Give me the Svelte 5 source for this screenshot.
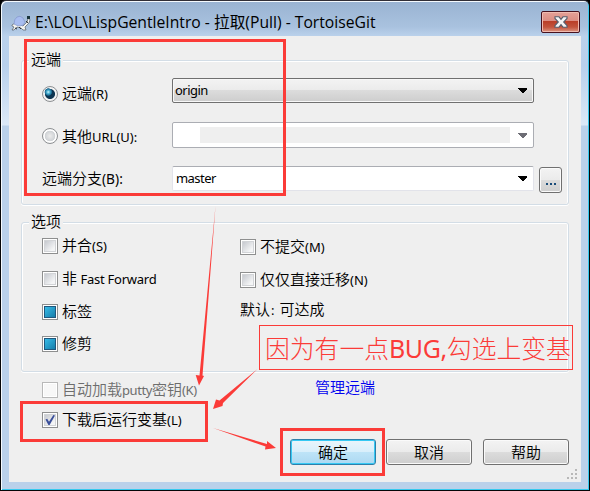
<script>
  let source = $state('remote');
  let options = $state([
    { cjk: '并合', latin: '(S)', mark: 'none', h: 32 },
    { cjk: '非', latin: 'Fast Forward', mark: 'none', h: 33, gap: true },
    { cjk: '标签', latin: '', mark: 'mixed', h: 33 },
    { cjk: '修剪', latin: '', mark: 'mixed', h: 32 }
  ]);
  let extra = $state([
    { cjk: '不提交', latin: '(M)', mark: 'none', h: 33 },
    { cjk: '仅仅直接迁移', latin: '(N)', mark: 'none', h: 34 }
  ]);
  let rebase = $state(true);
  const toggle = (o) => (o.mark = o.mark === 'none' ? 'mixed' : 'none');
</script>

{#snippet arrow()}
  <svg class="drop" width="9" height="5" viewBox="0 0 9 5" shape-rendering="crispEdges"><path d="M0 0H9V1L5 5H4L0 1Z" /></svg>
{/snippet}

{#snippet box(mark, disabled)}
  <span class="check" class:disabled>
    <span class="inner" class:mixed={mark === 'mixed'}></span>
    {#if mark === 'tick'}
      <svg class="tick" width="12" height="12" viewBox="0 0 12 12"><path d="M1.5 5.5 3.2 4.7 5 7.7 9.4 1 11 1.6 5.6 11 4.4 11Z" /></svg>
    {/if}
  </span>
{/snippet}

<div class="window">
  <header>
    <svg class="turtle" width="20" height="17" viewBox="0 0 20 17">
      <path d="M1 10 4 8 12 11 16 7 17 4 18 3 19 5 18 8 14 12 15 15H12L10 13 6 12 3 15H1L3 12 1 11Z" fill="#f4f4f0" stroke="#555b65" stroke-width=".7" />
      <path d="M3 9Q3 4 6 2Q9 0 12 3L14 7Q13 11 9 11Q6 11 3 9Z" fill="#a8bdf0" stroke="#8295c8" stroke-width=".7" />
      <path d="M16 1h3v3h-3z" fill="#18343c" />
      <path d="M8 12 10 14M4 13 6 14M15 6 17 8" stroke="#333" />
    </svg>
    <h1>E:\LOL\LispGentleIntro - <span>拉取</span>(Pull) - TortoiseGit</h1>
    <button class="close" aria-label="关闭">
      <svg width="14" height="12" viewBox="0 0 14 12"><path d="M1 .8H5L7 3.4 9 .8H13V2.5L9.7 6 13 9.5V11.2H9L7 8.6 5 11.2H1V9.5L4.3 6 1 2.5Z" fill="#f5f5f5" stroke="#555d6c" stroke-width="1.1" /></svg>
    </button>
  </header>

  <main>
    <section class="remote">
      <h2>远端</h2>
      <div class="row first">
        <button class="lab" onclick={() => (source = 'remote')}>
          <span class="radio" class:on={source === 'remote'}></span><span class="txt">远端<i>(R)</i></span>
        </button>
        <div class="combo raised"><i>origin</i>{@render arrow()}</div>
      </div>
      <div class="row second">
        <button class="lab" onclick={() => (source = 'url')}>
          <span class="radio" class:on={source === 'url'}></span><span class="txt">其他<i>URL(U):</i></span>
        </button>
        <div class="combo off"><span class="blank"></span>{@render arrow()}</div>
      </div>
      <div class="row third">
        <span class="lab"><span class="txt plain">远端分支<i>(B):</i></span></span>
        <div class="combo edit"><i>master</i>{@render arrow()}</div>
        <button class="btn more" aria-label="浏览"><b></b><b></b><b></b></button>
      </div>
    </section>

    <section class="options">
      <h2>选项</h2>
      <div class="col left">
        {#each options as o}
          <button class="opt" style="height:{o.h}px" onclick={() => toggle(o)}>
            {@render box(o.mark)}<span class="txt">{o.cjk}<i class:gap={o.gap}>{o.latin}</i></span>
          </button>
        {/each}
      </div>
      <div class="col">
        {#each extra as o}
          <button class="opt" style="height:{o.h}px" onclick={() => toggle(o)}>
            {@render box(o.mark)}<span class="txt">{o.cjk}<i>{o.latin}</i></span>
          </button>
        {/each}
        <span class="txt default">默认<i class="colon">:</i>可达成</span>
      </div>
    </section>

    <div class="putty">
      <span class="opt">{@render box('none', true)}<span class="txt grey">自动加载<i class="tight">putty</i>密钥<i class="tight">(K)</i></span></span>
      <span class="link">管理远端</span>
    </div>
    <button class="opt launch" onclick={() => (rebase = !rebase)}>
      {@render box(rebase ? 'tick' : 'none')}<span class="txt">下载后运行变基<i>(L)</i></span>
    </button>

    <footer>
      <button class="btn primary">确定</button>
      <button class="btn">取消</button>
      <button class="btn">帮助</button>
    </footer>
  </main>

  <svg class="grip" width="12" height="12" viewBox="0 0 12 12" shape-rendering="crispEdges">
    <path d="M9 1h2v2h-2zM5 5h2v2h-2zM9 5h2v2h-2zM1 9h2v2h-2zM5 9h2v2h-2zM9 9h2v2h-2z" fill="#b8b8b8" />
  </svg>

  <svg class="marks" width="590" height="491" viewBox="0 0 590 491">
    <g fill="none" stroke="#fb3b38" stroke-width="3">
      <rect x="25.5" y="40.5" width="259" height="154" />
      <rect x="21.5" y="402.5" width="185" height="38" />
      <rect x="281.5" y="429.5" width="102" height="45" />
    </g>
    <g fill="#fb3b38">
      <path d="M215.5 206 202.5 375.5 204 376 199 385.5 195.7 375 199.5 375.5Z" />
      <path d="M257.5 369 223 403 222.5 406 213 409 216 399.5 219.5 400.5Z" />
      <path d="M213 428 267 444 267 441 276 448 265 449.5 265.5 446.5Z" />
    </g>
  </svg>
  <div class="note"><span>因为有一点<i>BUG,</i>勾选上变基</span></div>
</div>

<style>
  :global(body) { margin: 0; background: #000; }
  * { box-sizing: border-box; }
  .window {
    position: relative; width: 590px; height: 491px;
    border: 1px solid #050607; border-top-color: #302e36;
    padding: 1px 8px 8px; border-radius: 6px 6px 0 0;
    background: linear-gradient(#99b3d2 0, #a9c2df 26px, #bad1eb 35px, #b8d0ec 65px, #dce9f7 124px, #bad1ea 125px, #bad1ea 100%);
    box-shadow: inset 1px 1px #f5fafe, inset -1px -1px #36c9ee;
    font: 15px/20px 'Noto Sans CJK SC', sans-serif; font-weight: 350; color: #000;
  }
  button { font: inherit; color: inherit; padding: 0; border: 0; background: none; text-align: left; }
  i { font-style: normal; font-weight: 400; font-family: 'Noto Sans', 'Open Sans', sans-serif; font-size: 13px; }
  header { height: 34px; display: flex; align-items: flex-start; }
  .turtle { margin: 13px 0 0 2px; }
  h1 {
    flex: 1; margin: 9px 0 0 4px; font: 15.7px/22px 'Open Sans', 'Noto Sans CJK SC', sans-serif; white-space: nowrap;
  }
  .close {
    width: 39px; height: 22px; margin: 9px 1px 0 0; border: 1px solid #47111e; border-radius: 2px;
    display: flex; align-items: center; justify-content: center;
    background: linear-gradient(#e5a198 0, #dc8d82 9px, #b93d27 9px, #c3543d 15px, #dc9582 100%);
    box-shadow: inset 0 0 0 1px #f0bbb0;
  }
  main { height: 446px; background: #efefef; padding: 24px 12px 0; }
  section { position: relative; width: 548px; border: 1px solid #d3dde6; border-radius: 3px; box-shadow: inset 1px 1px #fff, inset -1px 0 #fff, 0 1px #fff; }
  h2 { position: absolute; left: 7px; top: -13px; margin: 0; padding: 0 2px; background: #efefef; font: inherit; line-height: 22px; }
  .remote { height: 145px; padding: 17px 0 0 20px; }
  .row { display: flex; align-items: center; height: 26px; }
  .first { height: 25px; }
  .first .lab { padding-top: 6px; }
  .second { margin-top: 19px; }
  .second .lab { padding-top: 2px; }
  .third { margin-top: 18px; height: 25px; }
  .lab { width: 130px; display: flex; align-items: center; }
  .txt { margin-left: 4px; white-space: nowrap; }
  .plain { margin-left: 0; }
  .plain i { font-size: 13.7px; }
  .radio {
    width: 16px; height: 16px; border-radius: 50%; border: 1px solid #8c8f92;
    background: radial-gradient(circle at 50% 50%, #ececec 0, #cfd2d5 5px, #fff 5.6px, #f4f4f4 8px);
  }
  .radio.on { background: radial-gradient(circle at 38% 36%, #c9f2fa 0, #4fb4d4 1.6px, #17648c 3.4px, transparent 4px), radial-gradient(circle, #0d3450 0 4.6px, #f2f2f2 5.4px); }
  .combo { width: 362px; height: 25px; display: flex; align-items: center; border: 1px solid #abadb3; border-radius: 2px; background: #fff; padding: 0 6px 0 3px; justify-content: space-between; }
  .combo i { line-height: 20px; letter-spacing: -.55px; margin-top: -2px; }
  .raised { border-color: #707070; background: linear-gradient(#f3f3f3, #ebebeb 48%, #dcdcdc 49%, #cdcdcd); box-shadow: inset 0 0 0 1px #f8f8f8; padding-left: 2px; }
  .off { height: 26px; color: #6d6d75; }
  .blank { width: 310px; height: 16px; margin: 0 auto 0 24px; background: #efefef; }
  .edit { border-color: #abadb3 #e2e3ea #e2e3ea; }
  .drop { fill: currentColor; flex: none; }
  .btn {
    width: 86px; height: 26px; border: 1px solid #707070; border-radius: 3px; text-align: center; line-height: 22px;
    background: linear-gradient(#f3f3f3, #ebebeb 48%, #dcdcdc 49%, #cecece); box-shadow: inset 0 0 0 1px #fafafa;
  }
  .primary { border-color: #2f7fa9; background: linear-gradient(#eaf5fb, #d9effb 48%, #bee4f8 49%, #add9f2); box-shadow: inset 0 0 0 1px #36c9f4; }
  .more { width: 23px; flex: none; margin: 3px 0 0 5px; display: flex; justify-content: center; gap: 2px; padding-top: 15px; }
  .more b { width: 2px; height: 2px; background: #174a78; }
  .options { height: 150px; margin-top: 17px; padding: 7px 0 0 20px; display: flex; }
  .options .txt { margin-top: -1px; }
  .col { display: flex; flex-direction: column; }
  .left { width: 198px; }
  .opt { display: flex; align-items: center; }
  .check { position: relative; flex: none; width: 16px; height: 16px; border: 1px solid #8e8f8f; background: #f6f6f6; padding: 2px; box-shadow: inset 0 0 0 1px #fff; }
  .inner { display: block; width: 10px; height: 10px; background: linear-gradient(135deg, #c6c9cf, #f4f5f6 80%); box-shadow: 0 0 0 1px #d2d4d7; }
  .inner:not(.mixed) { margin: 0; border: 0; outline: 0; }
  .check:has(.mixed) { padding: 1px; }
  .mixed { width: 12px; height: 12px; background: linear-gradient(135deg, #38bce8, #167da9); border: 1px solid #20577d; box-shadow: none; }
  .disabled { border-color: #b8b8b8; }
  .disabled .inner { background: #f7f7f7; box-shadow: none; }
  .tick { position: absolute; left: 1px; top: 1px; fill: #3a4f9a; }
  .gap { margin-left: 3.5px; letter-spacing: -.25px; }
  .tight { letter-spacing: -.4px; }
  .colon { margin: 0 5px 0 1px; }
  .options .default { margin: 2px 0 0; }
  .putty { display: flex; height: 30px; margin-top: 3px; padding-left: 21px; align-items: center; }
  .putty .opt { width: 273px; }
  .putty .txt { margin-top: -2px; }
  .grey { color: #6d6d6d; }
  .link { color: #0000f0; margin-top: -6px; }
  .launch { height: 30px; margin-left: 21px; }
  .launch .txt { margin-top: -1px; }
  footer { display: flex; margin: 4px 0 0 269px; gap: 11px; }
  footer .primary { margin-right: -1px; }
  .grip { position: absolute; left: 565px; top: 467px; }
  .marks { position: absolute; left: -1px; top: -1px; pointer-events: none; }
  .note {
    position: absolute; left: 258px; top: 324px; width: 314px; height: 45px; border: 1px solid #fb3b38;
    color: #fb3b38; font: 300 24.8px/42px 'Noto Sans CJK SC', sans-serif; padding-left: 5px; white-space: nowrap; pointer-events: none;
  }
  .note i { font: 25px/30px 'Noto Sans', sans-serif; letter-spacing: -.4px; }
</style>
